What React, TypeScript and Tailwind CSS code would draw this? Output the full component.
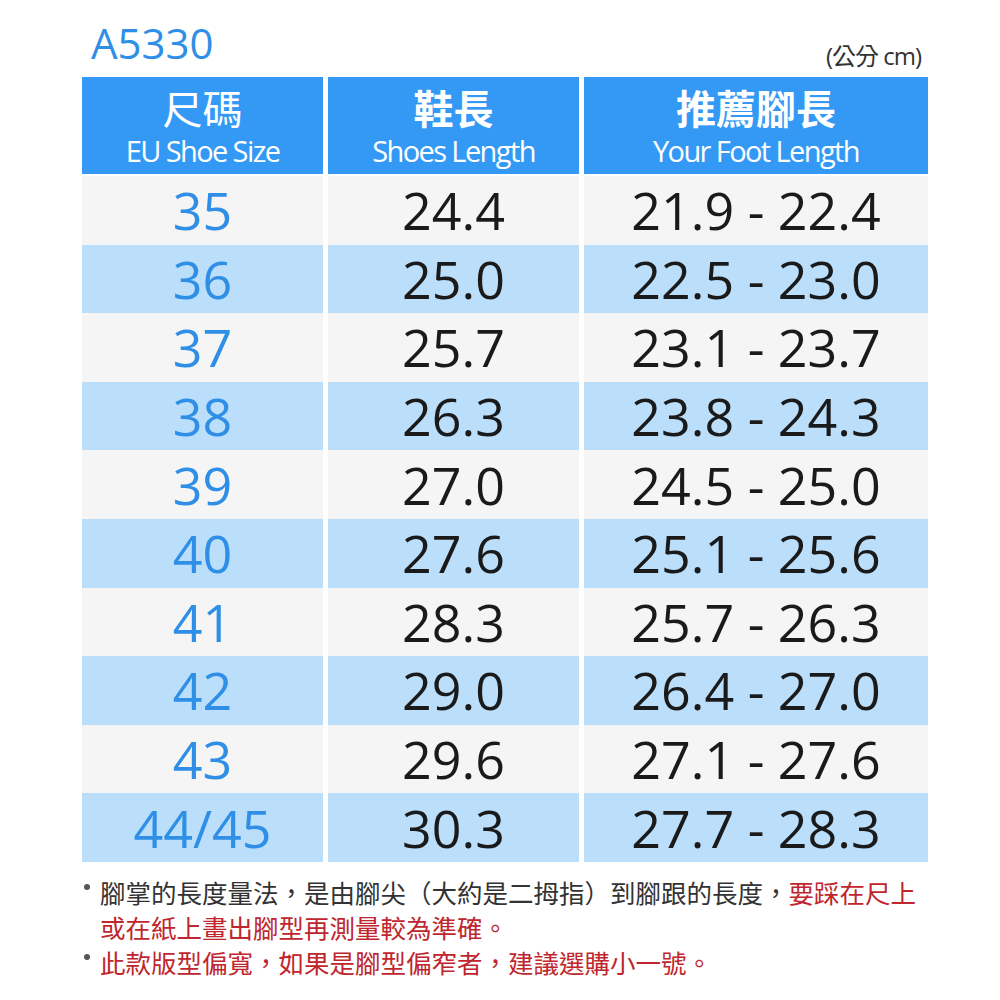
import React from "react";

const rows = [
  ["35", "24.4", "21.9 - 22.4"],
  ["36", "25.0", "22.5 - 23.0"],
  ["37", "25.7", "23.1 - 23.7"],
  ["38", "26.3", "23.8 - 24.3"],
  ["39", "27.0", "24.5 - 25.0"],
  ["40", "27.6", "25.1 - 25.6"],
  ["41", "28.3", "25.7 - 26.3"],
  ["42", "29.0", "26.4 - 27.0"],
  ["43", "29.6", "27.1 - 27.6"],
  ["44/45", "30.3", "27.7 - 28.3"],
];

const font = { fontFamily: '"Open Sans", "Noto Sans CJK TC", sans-serif' };

const App = () => {
  return (
    <div className="w-[1000px] h-[1000px] bg-white relative" style={font}>
      <div className="pl-[82px] pr-[71px] pt-[22px]">
        <div className="flex items-end justify-between h-[55px]">
          <div className="pl-[9px] text-[42px] leading-none text-[#2f8fe6] pb-[13px]">A5330</div>
          <div className="text-[24px] leading-none text-[#333] pb-[9px] pr-[8px] tracking-[-1px]">(公分 cm)</div>
        </div>

        <div className="grid grid-cols-[241px_251px_344px] gap-x-[5px]">
          <div className="h-[97px] bg-[#3399f5] flex flex-col items-center justify-center text-white pt-[6px]">
            <div className="text-[40px] leading-[44px] font-normal">尺碼</div>
            <div className="text-[29px] leading-[40px] tracking-[-1.6px] font-normal">EU Shoe Size</div>
          </div>
          <div className="h-[97px] bg-[#3399f5] flex flex-col items-center justify-center text-white pt-[6px]">
            <div className="text-[40px] leading-[44px] font-bold">鞋長</div>
            <div className="text-[29px] leading-[40px] tracking-[-1.6px] font-normal">Shoes Length</div>
          </div>
          <div className="h-[97px] bg-[#3399f5] flex flex-col items-center justify-center text-white pt-[6px]">
            <div className="text-[40px] leading-[44px] font-bold">推薦腳長</div>
            <div className="text-[29px] leading-[40px] tracking-[-1.6px] font-normal">Your Foot Length</div>
          </div>

          <div className="col-span-3 h-[2px]" />

          {rows.map((r, i) => {
            const bg = i % 2 === 0 ? "bg-[#f5f5f5]" : "bg-[#bbdefb]";
            return (
              <React.Fragment key={r[0]}>
                <div className={`h-[68.6px] ${bg} flex items-center justify-center text-[52px] text-[#2f8fe6]`}>
                  {r[0]}
                </div>
                <div className={`h-[68.6px] ${bg} flex items-center justify-center text-[52px] text-[#1a1a1a]`}>
                  {r[1]}
                </div>
                <div className={`h-[68.6px] ${bg} flex items-center justify-center text-[52px] text-[#1a1a1a]`}>
                  {r[2]}
                </div>
              </React.Fragment>
            );
          })}
        </div>

        <div
          className="mt-[12px] text-[25.5px] leading-[35px] text-[#333] whitespace-nowrap"
          style={{ fontFamily: '"Noto Sans CJK TC", sans-serif' }}
        >
          <div className="flex items-start">
            <span className="shrink-0 w-[6px] h-[6px] rounded-full bg-[#555] mt-[10px] ml-[2px] mr-[10px]" />
            <div>
              腳掌的長度量法，是由腳尖（大約是二拇指）到腳跟的長度，<span className="text-[#c0262d]">要踩在尺上</span>
              <br />
              <span className="text-[#c0262d]">或在紙上畫出腳型再測量較為準確。</span>
            </div>
          </div>
          <div className="flex items-start">
            <span className="shrink-0 w-[6px] h-[6px] rounded-full bg-[#555] mt-[10px] ml-[2px] mr-[10px]" />
            <div className="text-[#c0262d]">此款版型偏寬，如果是腳型偏窄者，建議選購小一號。</div>
          </div>
        </div>
      </div>
    </div>
  );
};

export default App;
